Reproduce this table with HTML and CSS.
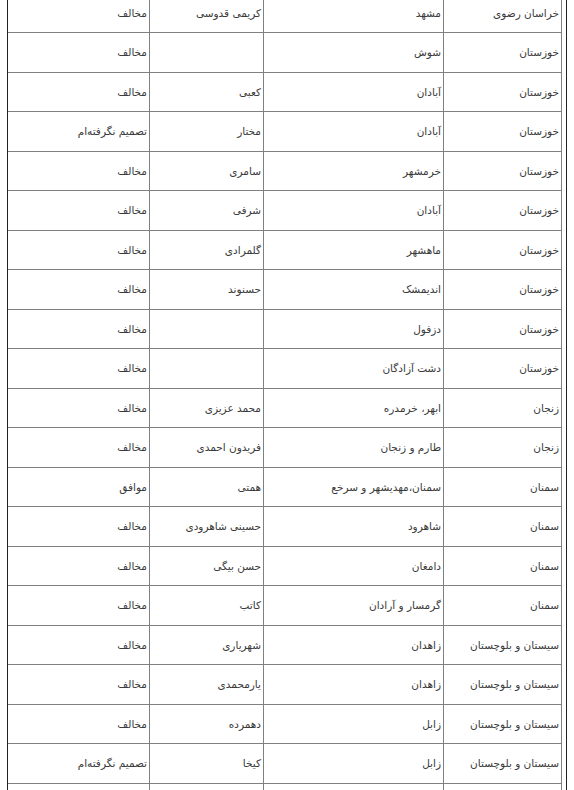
FILE: index.html
```html
<!DOCTYPE html>
<html lang="fa">
<head>
<meta charset="utf-8">
<title>جدول</title>
<link rel="stylesheet" href="styles.css">
</head>
<body>
<div class="frame">
<table class="votes" dir="rtl">
<colgroup><col class="c-prov"><col class="c-city"><col class="c-name"><col class="c-vote"></colgroup>
<tbody>
<tr><td>خراسان رضوی</td><td>مشهد</td><td>کریمی قدوسی</td><td>مخالف</td></tr>
<tr><td>خوزستان</td><td>شوش</td><td></td><td>مخالف</td></tr>
<tr><td>خوزستان</td><td>آبادان</td><td>کعبی</td><td>مخالف</td></tr>
<tr><td>خوزستان</td><td>آبادان</td><td>مختار</td><td>تصمیم نگرفته‌ام</td></tr>
<tr><td>خوزستان</td><td>خرمشهر</td><td>سامری</td><td>مخالف</td></tr>
<tr><td>خوزستان</td><td>آبادان</td><td>شرفی</td><td>مخالف</td></tr>
<tr><td>خوزستان</td><td>ماهشهر</td><td>گلمرادی</td><td>مخالف</td></tr>
<tr><td>خوزستان</td><td>اندیمشک</td><td>حسنوند</td><td>مخالف</td></tr>
<tr><td>خوزستان</td><td>دزفول</td><td></td><td>مخالف</td></tr>
<tr><td>خوزستان</td><td>دشت آزادگان</td><td></td><td>مخالف</td></tr>
<tr><td>زنجان</td><td>ابهر، خرمدره</td><td>محمد عزیزی</td><td>مخالف</td></tr>
<tr><td>زنجان</td><td>طارم و زنجان</td><td>فریدون احمدی</td><td>مخالف</td></tr>
<tr><td>سمنان</td><td>سمنان،مهدیشهر و سرخع</td><td>همتی</td><td>موافق</td></tr>
<tr><td>سمنان</td><td>شاهرود</td><td>حسینی شاهرودی</td><td>مخالف</td></tr>
<tr><td>سمنان</td><td>دامغان</td><td>حسن بیگی</td><td>مخالف</td></tr>
<tr><td>سمنان</td><td>گرمسار و آرادان</td><td>کاتب</td><td>مخالف</td></tr>
<tr><td>سیستان و بلوچستان</td><td>زاهدان</td><td>شهریاری</td><td>مخالف</td></tr>
<tr><td>سیستان و بلوچستان</td><td>زاهدان</td><td>یارمحمدی</td><td>مخالف</td></tr>
<tr><td>سیستان و بلوچستان</td><td>زابل</td><td>دهمرده</td><td>مخالف</td></tr>
<tr><td>سیستان و بلوچستان</td><td>زابل</td><td>کیخا</td><td>تصمیم نگرفته‌ام</td></tr>
<tr><td></td><td></td><td></td><td></td></tr>
</tbody>
</table>
</div>
</body>
</html>
```
FILE: styles.css
```css
html, body {
  margin: 0;
  padding: 0;
  background: #fff;
  overflow: hidden;
}
body {
  height: 790px;
}
.frame {
  margin-left: 7px;
  width: 558px;
  border-left: 1px solid #222;
  border-right: 1px solid #222;
  height: 800px;
  margin-top: -7px;
  padding-top: 0.5px;
}
.votes {
  table-layout: fixed;
  border-collapse: separate;
  border-spacing: 0;
  width: 554px;
  font-family: "DejaVu Sans", sans-serif;
  font-size: 10.5px;
  color: #3a3a3a;
}
.c-prov { width: 118px; }
.c-city { width: 180px; }
.c-name { width: 114px; }
.c-vote { width: 142px; }
.votes td {
  box-sizing: border-box;
  height: 39.5px;
  padding: 0 2px 0 0;
  text-align: right;
  vertical-align: middle;
  border-right: 1px solid #808080;
  border-bottom: 1px solid #808080;
  white-space: nowrap;
  overflow: hidden;
}
```
